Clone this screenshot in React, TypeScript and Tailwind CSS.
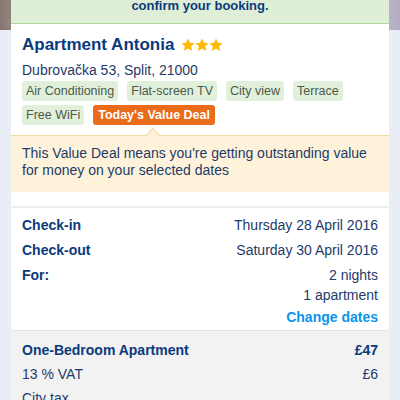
import React from 'react';

const amenities = ['Air Conditioning', 'Flat-screen TV', 'City view', 'Terrace', 'Free WiFi'];

const Star: React.FC = () => (
  <svg viewBox="0 0 24 24" className="w-[14px] h-[14px]" fill="#febb02">
    <path d="M12 0.8l3.4 7.2 7.9.9-5.9 5.4 1.7 7.9L12 18.2l-7.1 4 1.7-7.9L.7 8.9l7.9-.9z" />
  </svg>
);

const Row: React.FC<{ label: string; children: React.ReactNode }> = ({ label, children }) => (
  <div className="flex justify-between items-start">
    <span className="font-bold text-[#0b3a7c]">{label}</span>
    <div className="text-right text-[#1f3a68]">{children}</div>
  </div>
);

const App: React.FC = () => {
  return (
    <div
      className="min-h-[400px] bg-[#e8edf6] bg-[linear-gradient(to_right,#85766f,#a99f9f_8%,#c9c3d2_92%,#b2abc3)] bg-no-repeat bg-[length:100%_30px] px-[11px] overflow-hidden"
      style={{ fontFamily: '"Liberation Sans", Arial, sans-serif' }}
    >
      <div className="bg-white">
        <div className="h-[24px] bg-[#dfefd7] border-b border-[#b3d7a2] overflow-hidden">
          <p className="-mt-[2px] text-center text-[13px] leading-[16px] font-bold text-[#0b3a7c]">
            confirm your booking.
          </p>
        </div>

        <div className="px-[11px] pt-[10px]">
          <div className="flex items-center gap-[7px]">
            <h1 className="text-[17px] leading-[22px] font-bold text-[#0b3a7c]">Apartment Antonia</h1>
            <div className="flex">
              <Star />
              <Star />
              <Star />
            </div>
          </div>
          <p className="mt-[5px] text-[14px] leading-[18px] text-[#1f3a68]">Dubrovačka 53, Split, 21000</p>

          <div className="mt-[2px] flex flex-wrap gap-x-[9px] gap-y-[4px]">
            {amenities.map(a => (
              <span
                key={a}
                className="h-[20px] px-[4px] rounded-[3px] bg-[#e1f0da] text-[12.5px] leading-[20px] text-[#4d5a4a]"
              >
                {a}
              </span>
            ))}
            <span className="h-[20px] px-[5px] rounded-[3px] bg-[#ea6c1a] text-[12.5px] leading-[20px] font-bold text-white">
              Today's Value Deal
            </span>
          </div>
        </div>

        <div className="relative mt-[10px] bg-[#fef3da] border-t border-[#f2d89f] px-[11px] pt-[9px] pb-[13px] text-[14px] leading-[17px] text-[#1f3a68]">
          <div className="absolute -top-[6px] left-[137px] w-[10px] h-[10px] rotate-45 bg-[#fef3da] border-l border-t border-[#f2d89f]" />
          <p>This Value Deal means you're getting outstanding value for money on your selected dates</p>
        </div>

        <div className="h-[14px]" />

        <div className="border-t-2 border-[#eceef1] px-[11px] pt-[8px] pb-[4px] text-[14px] leading-[18px]">
          <div className="flex flex-col gap-[7px]">
            <Row label="Check-in">Thursday 28 April 2016</Row>
            <Row label="Check-out">Saturday 30 April 2016</Row>
            <Row label="For:">
              <div className="leading-[20px] -mt-px">2 nights</div>
              <div className="leading-[20px]">1 apartment</div>
            </Row>
          </div>
          <div className="mt-[3px] text-right font-bold text-[#0a94ec]">Change dates</div>
        </div>

        <div className="border-t border-[#e2e4e8] bg-[#f2f2f2] px-[11px] pt-[10px] pb-[10px] text-[14px] leading-[18px]">
          <div className="flex flex-col gap-[6px]">
            <div className="flex justify-between font-bold text-[#0b3a7c]">
              <span>One-Bedroom Apartment</span>
              <span>£47</span>
            </div>
            <div className="flex justify-between text-[#1f3a68]">
              <span>13 % VAT</span>
              <span>£6</span>
            </div>
            <div className="text-[#1f3a68]">City tax</div>
          </div>
        </div>
      </div>
    </div>
  );
};

export default App;
